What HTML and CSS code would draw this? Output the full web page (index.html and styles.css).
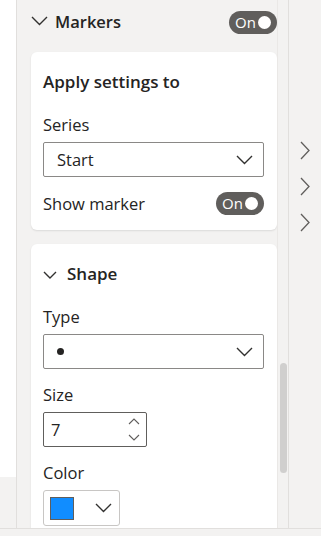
FILE: index.html
```html
<!DOCTYPE html>
<html lang="en">
  <head>
    <meta charset="utf-8">
    <title>Format pane - Markers</title>
    <link rel="stylesheet" href="styles.css">
  </head>
  <body>
    <div class="app">
      <div class="main">
        <div class="rail">
          <div class="rail-top"></div>
        </div>

        <section class="pane">
          <div class="group-head">
            <svg class="chev" width="17" height="10" viewBox="0 0 17 10"><polyline points="1,1 8.5,8.5 16,1"/></svg>
            <span class="group-title">Markers</span>
            <span class="toggle">On<i></i></span>
          </div>

          <div class="card">
            <h3 class="card-title">Apply settings to</h3>
            <div class="label">Series</div>
            <div class="dropdown">
              <span>Start</span>
              <svg class="chev" width="17" height="10" viewBox="0 0 17 10"><polyline points="1,1 8.5,8.5 16,1"/></svg>
            </div>
            <div class="row">
              <span>Show marker</span>
              <span class="toggle">On<i></i></span>
            </div>
          </div>

          <div class="card">
            <div class="sub-head">
              <svg class="chev" width="14" height="8" viewBox="0 0 14 8"><polyline points="1,1 7,7 13,1"/></svg>
              <span class="card-title">Shape</span>
            </div>
            <div class="label">Type</div>
            <div class="dropdown">
              <span class="dot"></span>
              <svg class="chev" width="17" height="10" viewBox="0 0 17 10"><polyline points="1,1 8.5,8.5 16,1"/></svg>
            </div>
            <div class="label">Size</div>
            <div class="spin">
              <span>7</span>
              <span class="spin-btns">
                <svg width="12" height="7" viewBox="0 0 12 7"><polyline points="1,6 6,1 11,6"/></svg>
                <svg width="12" height="7" viewBox="0 0 12 7"><polyline points="1,1 6,6 11,1"/></svg>
              </span>
            </div>
            <div class="label">Color</div>
            <div class="color-btn">
              <span class="swatch"></span>
              <svg class="chev" width="17" height="10" viewBox="0 0 17 10"><polyline points="1,1 8.5,8.5 16,1"/></svg>
            </div>
          </div>
        </section>

        <div class="scroll">
          <div class="thumb"></div>
        </div>

        <nav class="side">
          <svg width="10" height="19" viewBox="0 0 10 19"><polyline points="1,1 9,9.5 1,18"/></svg>
          <svg width="10" height="19" viewBox="0 0 10 19"><polyline points="1,1 9,9.5 1,18"/></svg>
          <svg width="10" height="19" viewBox="0 0 10 19"><polyline points="1,1 9,9.5 1,18"/></svg>
        </nav>
      </div>
      <div class="statusbar"></div>
    </div>
  </body>
</html>
```

FILE: styles.css
```css
body {
  margin: 0;
  font-family: "Open Sans", "Noto Sans", sans-serif;
  color: #252423;
  background: #f3f2f1;
}
.app {
  width: 321px;
  height: 536px;
  display: flex;
  flex-direction: column;
  overflow: hidden;
}
.main {
  display: flex;
  height: 528px;
}
.statusbar {
  flex: 1;
  border-top: 1px solid #e1dfdd;
  background: #f3f2f1;
}
.rail {
  width: 16px;
  border-right: 1px solid #e1dfdd;
  background: #f3f2f1;
}
.rail-top {
  height: 477px;
  background: #fff;
}
.pane {
  width: 246px;
  padding-left: 14px;
  overflow: hidden;
}
svg polyline {
  fill: none;
  stroke: #323130;
  stroke-width: 1.4;
}
.group-head {
  height: 42px;
  display: flex;
  align-items: center;
}
.group-head .chev {
  margin-right: 7px;
}
.group-title {
  font-size: 16.5px;
  font-weight: 600;
  flex: 1;
}
.toggle {
  width: 48px;
  height: 23px;
  box-sizing: border-box;
  border-radius: 12px;
  background: #605e5c;
  color: #fff;
  font-size: 15px;
  display: flex;
  align-items: center;
  padding: 0 6px 0 6px;
  justify-content: space-between;
}
.toggle i {
  width: 13px;
  height: 13px;
  border-radius: 50%;
  background: #fff;
}
.group-head .toggle {
  margin-top: 2px;
}
.card {
  background: #fff;
  border-radius: 6px;
  box-shadow: 0 1px 2px rgba(0, 0, 0, 0.1);
  padding: 18px 13px 15px 12px;
  margin: 10px 0 14px;
  font-size: 16.5px;
}
.card-title {
  margin: 0;
  font-size: 17px;
  font-weight: 600;
  line-height: 24px;
}
.label {
  line-height: 24px;
  margin-top: 19px;
  margin-bottom: 5px;
}
.dropdown {
  height: 35px;
  box-sizing: border-box;
  border: 1px solid #8a8886;
  border-radius: 2px;
  display: flex;
  align-items: center;
  justify-content: space-between;
  padding: 0 10px 0 13px;
}
.row {
  margin-top: 14px;
  height: 24px;
  display: flex;
  align-items: center;
  justify-content: space-between;
}
.sub-head {
  height: 24px;
  display: flex;
  align-items: center;
}
.sub-head .chev {
  margin: 1px 10px 0 0;
}
.dot {
  width: 7px;
  height: 7px;
  border-radius: 50%;
  background: #252423;
}
.dropdown + .label,
.spin + .label {
  margin-top: 14px;
}
.spin {
  width: 104px;
  height: 35px;
  box-sizing: border-box;
  border: 1px solid #605e5c;
  border-radius: 2px;
  display: flex;
  align-items: center;
  justify-content: space-between;
  padding: 0 6px 0 7px;
}
.spin-btns {
  display: flex;
  flex-direction: column;
  gap: 9px;
}
.spin-btns polyline {
  stroke: #605e5c;
  stroke-width: 1.1;
}
.color-btn {
  width: 77px;
  height: 36px;
  box-sizing: border-box;
  border: 1px solid #c8c6c4;
  border-radius: 3px;
  display: flex;
  align-items: center;
  justify-content: space-between;
  padding: 0 7px 0 6px;
}
.swatch {
  width: 24px;
  height: 23px;
  box-sizing: border-box;
  background: #118dff;
  border: 1px solid #605e5c;
}
.scroll {
  width: 12px;
  border-right: 1px solid #e1dfdd;
  border-left: 1px solid #eae8e6;
  box-sizing: border-box;
  padding: 363px 1px 0 2px;
}
.thumb {
  height: 110px;
  border-radius: 4px;
  background: #d0cfce;
}
.side {
  flex: 1;
  display: flex;
  flex-direction: column;
  align-items: center;
  gap: 17px;
  padding-top: 141px;
}
.side polyline {
  stroke: #605e5c;
  stroke-width: 1.3;
}
```
